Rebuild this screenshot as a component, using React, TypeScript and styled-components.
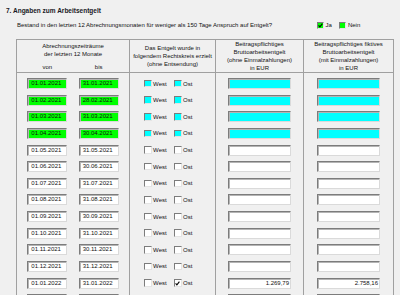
import React from "react";
import styled, { createGlobalStyle } from "styled-components";

const GlobalStyle = createGlobalStyle`
  html, body { margin: 0; padding: 0; background: #f0f0f0; overflow: hidden; }
  body { font-family: "Liberation Sans", Arial, sans-serif; color: #111; }
`;

const Page = styled.div`
  width: 400px;
  height: 295px;
  overflow: hidden;
  font-size: 6px;
`;

const Title = styled.h2`
  margin: 0;
  padding: 7px 0 0 6px;
  font-size: 6.5px;
  line-height: 8px;
  font-weight: bold;
  color: #1a1a26;
`;

const QuestionRow = styled.div`
  display: grid;
  grid-template-columns: 1fr 83px;
  align-items: center;
  height: 8px;
  margin-top: 6px;
  padding-left: 17px;
  line-height: 8px;
`;

const Choice = styled.div`
  display: flex;
  align-items: center;
`;

const ChoiceItem = styled.label<{ $w: number }>`
  display: flex;
  align-items: center;
  gap: 1.6px;
  width: ${(p) => p.$w}px;
`;

const Table = styled.div`
  display: grid;
  grid-template-columns: 113px 86px 88px 90px;
  width: max-content;
  margin: 10px 0 0 16px;
  border-top: 1px solid #a0a0a0;
  border-right: 1px solid #a0a0a0;
`;

const HeadCell = styled.div<{ $top?: boolean }>`
  box-sizing: border-box;
  height: 33px;
  border-left: 1px solid #a0a0a0;
  border-bottom: 1px solid #a0a0a0;
  display: flex;
  flex-direction: column;
  align-items: stretch;
  justify-content: ${(p) => (p.$top ? "flex-start" : "center")};
  padding-top: ${(p) => (p.$top ? "2px" : "0")};
  text-align: center;
  line-height: 8.2px;
  overflow: hidden;
`;

const PairRow = styled.div<{ $mt?: number }>`
  display: flex;
  justify-content: center;
  gap: 11.3px;
  margin-top: ${(p) => p.$mt ?? 0}px;
`;

const PairLabel = styled.span`
  width: 40px;
  text-align: center;
`;

const BodyCell = styled.div<{ $pad?: number; $center?: boolean }>`
  border-left: 1px solid #a0a0a0;
  display: flex;
  flex-direction: column;
  align-items: ${(p) => (p.$center ? "center" : "stretch")};
  gap: 5.64px;
  padding: 5px 0 0 ${(p) => p.$pad ?? 0}px;
  height: 240px;
`;

const Field = styled.div<{ $bg: string; $w: number; $right?: boolean }>`
  box-sizing: border-box;
  width: ${(p) => p.$w}px;
  height: 11px;
  flex: none;
  background: ${(p) => p.$bg};
  border: 1px solid;
  border-color: #7c7c7c #dadada #dadada #7c7c7c;
  box-shadow: inset 1px 1px 0 #b4b4b4;
  padding: 0 ${(p) => (p.$right ? "1px" : "2px")} 0 3px;
  text-align: ${(p) => (p.$right ? "right" : "left")};
  line-height: 9.5px;
  white-space: nowrap;
  overflow: hidden;
`;

const CheckRow = styled.div`
  display: flex;
  align-items: center;
  height: 11px;
  flex: none;
`;

const CheckItem = styled.label`
  display: flex;
  align-items: center;
  gap: 1.6px;
  width: 30px;
`;

const Box = styled.span<{ $bg: string; $size: number }>`
  box-sizing: border-box;
  width: ${(p) => p.$size}px;
  height: ${(p) => p.$size}px;
  flex: none;
  background: ${(p) => p.$bg};
  border: 1px solid;
  border-color: #7c7c7c #e4e4e4 #e4e4e4 #7c7c7c;
  display: inline-flex;
  align-items: center;
  justify-content: center;
`;

const Check = () => (
  <svg width="5" height="5" viewBox="0 0 5 5">
    <path d="M0.6 2.4 L1.9 3.9 L4.4 0.7" fill="none" stroke="#000" strokeWidth="1.1" />
  </svg>
);

const CheckBox = ({ bg, checked, size = 7.5 }: { bg: string; checked?: boolean; size?: number }) => (
  <Box $bg={bg} $size={size}>{checked ? <Check /> : null}</Box>
);

type Row = { von: string; bis: string; hl?: boolean; ost?: boolean; a?: string; b?: string; hidden?: boolean };

const rows: Row[] = [
  { von: "01.01.2021", bis: "31.01.2021", hl: true },
  { von: "01.02.2021", bis: "28.02.2021", hl: true },
  { von: "01.03.2021", bis: "31.03.2021", hl: true },
  { von: "01.04.2021", bis: "30.04.2021", hl: true },
  { von: "01.05.2021", bis: "31.05.2021" },
  { von: "01.06.2021", bis: "30.06.2021" },
  { von: "01.07.2021", bis: "31.07.2021" },
  { von: "01.08.2021", bis: "31.08.2021" },
  { von: "01.09.2021", bis: "30.09.2021" },
  { von: "01.10.2021", bis: "31.10.2021" },
  { von: "01.11.2021", bis: "30.11.2021" },
  { von: "01.12.2021", bis: "31.12.2021" },
  { von: "01.01.2022", bis: "31.01.2022", ost: true, a: "1.269,79", b: "2.758,16" },
  { von: "row14", bis: "", hidden: true },
];

const GREEN = "#00ff00";
const CYAN = "#00ffff";

export default function App() {
  return (
    <Page>
      <GlobalStyle />
      <Title>7. Angaben zum Arbeitsentgelt</Title>
      <QuestionRow>
        <span>Bestand in den letzten 12 Abrechnungsmonaten für weniger als 150 Tage Anspruch auf Entgelt?</span>
        <Choice>
          <ChoiceItem $w={22.3}>
            <CheckBox bg={GREEN} checked size={7} />
            Ja
          </ChoiceItem>
          <ChoiceItem $w={30}>
            <CheckBox bg={GREEN} size={7} />
            Nein
          </ChoiceItem>
        </Choice>
      </QuestionRow>
      <Table>
        <HeadCell $top>
          <div>Abrechnungszeiträume</div>
          <div>der letzten 12 Monate</div>
          <PairRow $mt={4.2}>
            <PairLabel>von</PairLabel>
            <PairLabel>bis</PairLabel>
          </PairRow>
        </HeadCell>
        <HeadCell>
          <div>Das Entgelt wurde in</div>
          <div>folgendem Rechtskreis erzielt</div>
          <div>(ohne Entsendung)</div>
        </HeadCell>
        <HeadCell>
          <div>Beitragspflichtiges</div>
          <div>Bruttoarbeitsentgelt</div>
          <div>(ohne Einmalzahlungen)</div>
          <div>in EUR</div>
        </HeadCell>
        <HeadCell>
          <div>Beitragspflichtiges fiktives</div>
          <div>Bruttoarbeitsentgelt</div>
          <div>(mit Einmalzahlungen)</div>
          <div>in EUR</div>
        </HeadCell>

        <BodyCell>
          {rows.map((r) => (
            <PairRow key={r.von}>
              <Field $w={40} $bg={r.hl ? GREEN : "#fff"}>{r.hidden ? "" : r.von}</Field>
              <Field $w={40} $bg={r.hl ? GREEN : "#fff"}>{r.bis}</Field>
            </PairRow>
          ))}
        </BodyCell>
        <BodyCell $pad={14}>
          {rows.map((r) => (
            <CheckRow key={r.von}>
              <CheckItem>
                <CheckBox bg={r.hl ? CYAN : "#fff"} />
                {r.hidden ? "" : "West"}
              </CheckItem>
              <CheckItem>
                <CheckBox bg={r.hl ? CYAN : "#fff"} checked={r.ost} />
                {r.hidden ? "" : "Ost"}
              </CheckItem>
            </CheckRow>
          ))}
        </BodyCell>
        <BodyCell $center>
          {rows.map((r) => (
            <Field key={r.von} $w={63} $right $bg={r.hl ? CYAN : "#fff"}>{r.a ?? ""}</Field>
          ))}
        </BodyCell>
        <BodyCell $center>
          {rows.map((r) => (
            <Field key={r.von} $w={63} $right $bg={r.hl ? CYAN : "#fff"}>{r.b ?? ""}</Field>
          ))}
        </BodyCell>
      </Table>
    </Page>
  );
}
